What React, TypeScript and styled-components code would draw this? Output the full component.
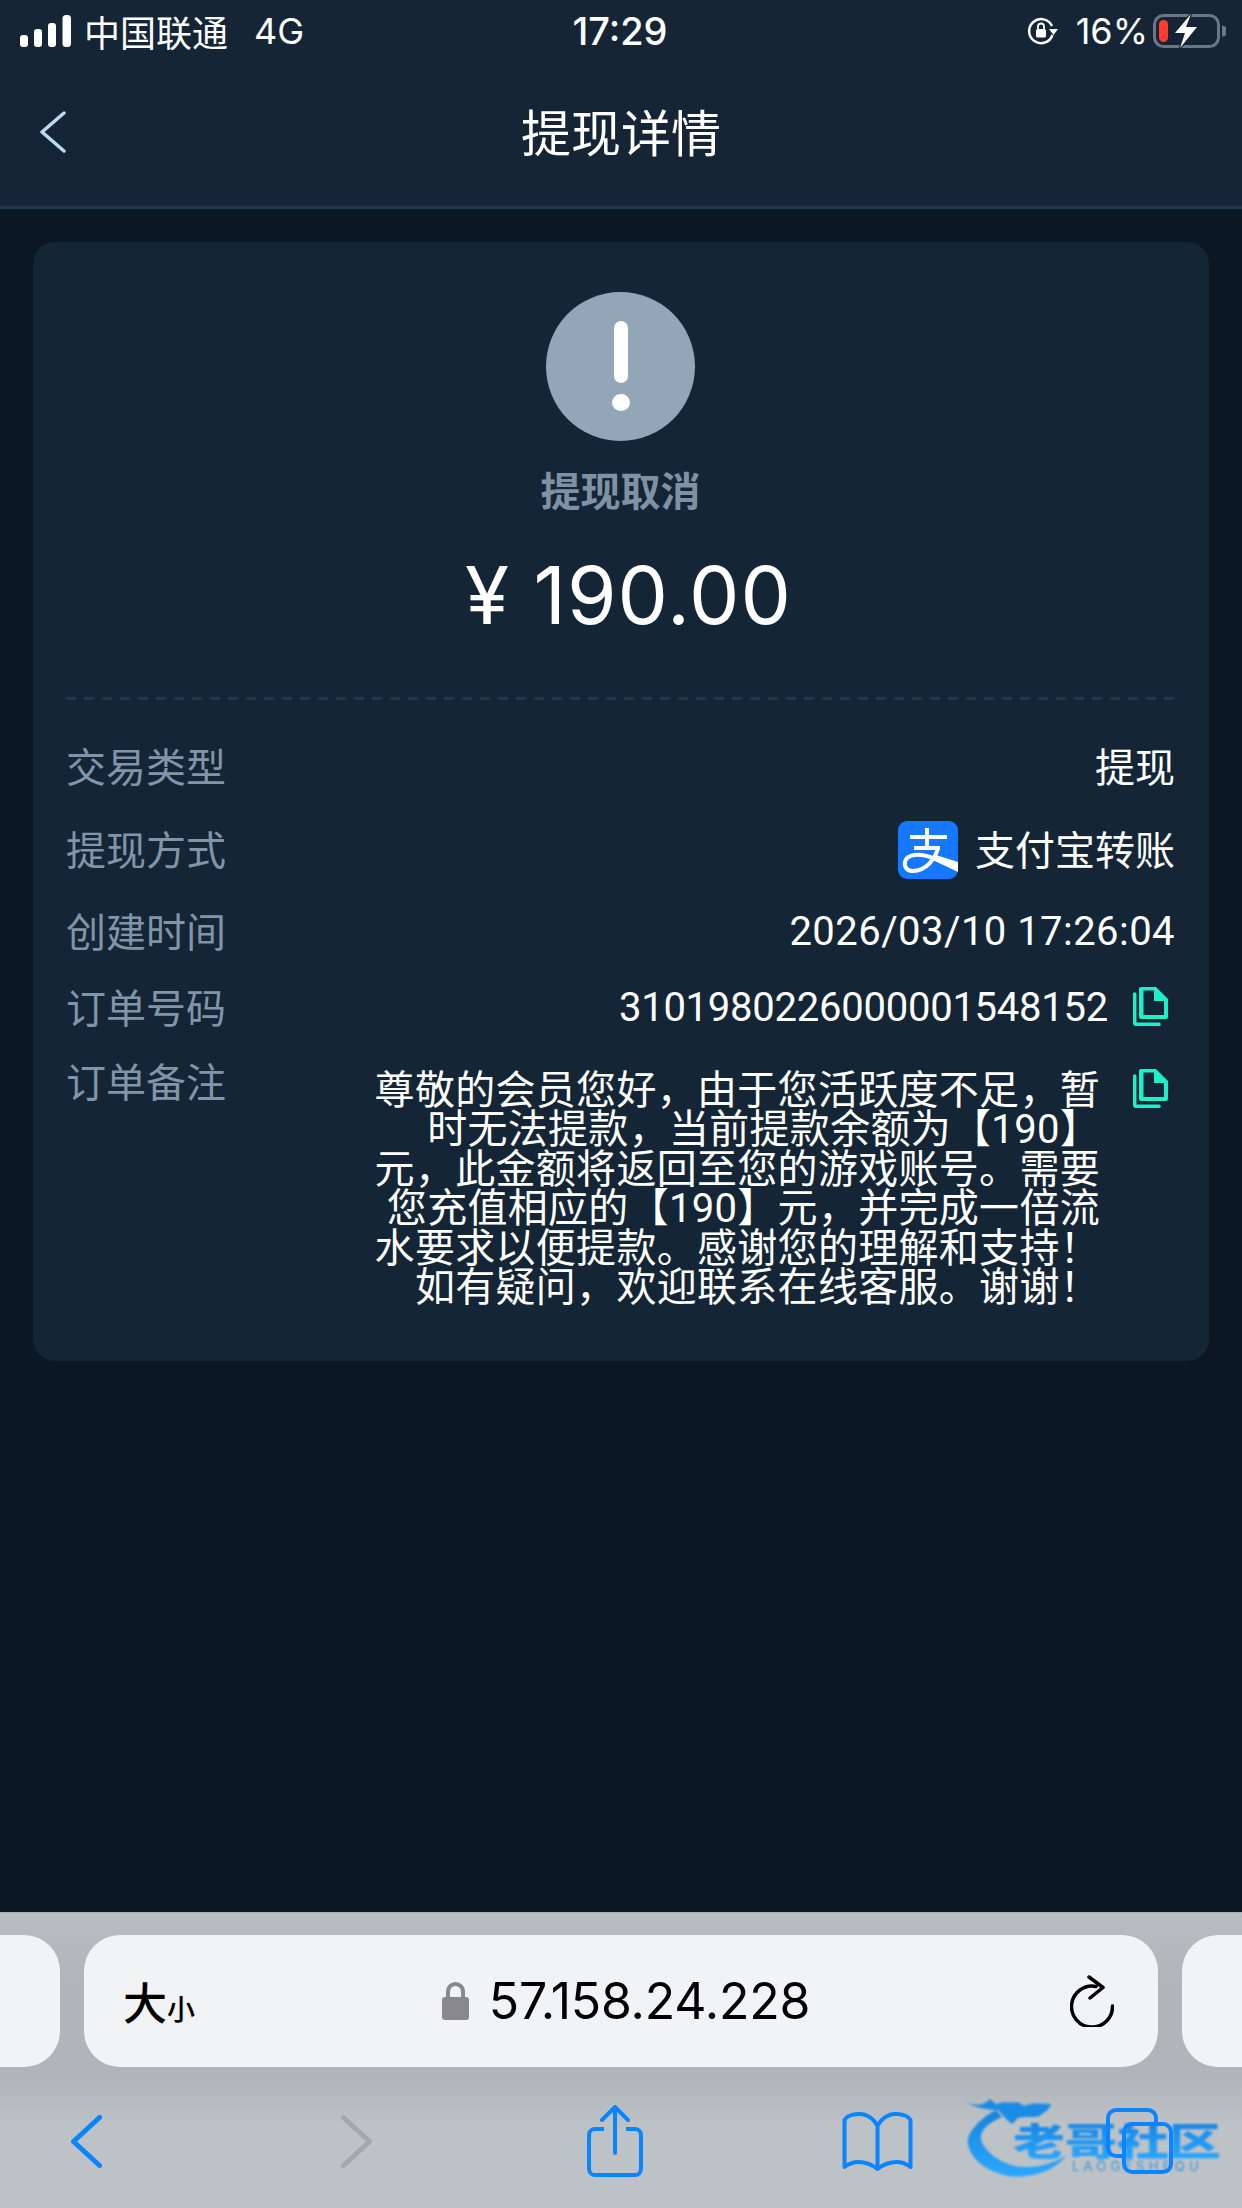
import React from 'react';
import styled, { createGlobalStyle } from 'styled-components';

const GlobalStyle = createGlobalStyle`
  html, body {
    margin: 0;
    padding: 0;
    background: #0b1823;
  }
  body {
    font-family: Inter, "Noto Sans CJK SC", sans-serif;
  }
`;

const Page = styled.div`
  position: relative;
  width: 1242px;
  height: 2208px;
  display: flex;
  flex-direction: column;
  overflow: hidden;
  background: #0b1823;
`;

const TopArea = styled.header`
  height: 206px;
  background: #152536;
  border-bottom: 3px solid #1f3850;
  color: #fff;
`;

const StatusBar = styled.div`
  display: grid;
  grid-template-columns: 1fr auto 1fr;
  align-items: center;
  height: 62px;
  padding: 0 16px 0 14px;
  font-size: 36px;
`;

const StatusLeft = styled.div`
  display: flex;
  align-items: center;
  gap: 12px;
  padding-left: 6px;
`;

const StatusRight = styled.div`
  display: flex;
  align-items: center;
  justify-content: flex-end;
  gap: 17px;
`;

const Network = styled.span`
  margin-left: 14px;
`;

const BatteryIcon = styled.svg`
  margin-left: -12px;
`;

const Clock = styled.div`
  font-weight: 500;
  font-size: 38px;
`;

const NavBar = styled.div`
  display: flex;
  align-items: center;
  justify-content: center;
  position: relative;
  height: 136px;
  padding-bottom: 6px;
`;

const BackIcon = styled.svg`
  position: absolute;
  left: 39px;
  top: 49px;
`;

const Title = styled.h1`
  margin: 0;
  font-size: 50px;
  font-weight: 400;
`;

const Content = styled.main`
  flex: 1;
  padding: 33px 33px 0;
`;

const Card = styled.section`
  height: 1119px;
  box-sizing: border-box;
  padding: 50px 34px 0 33px;
  background: #142536;
  border-radius: 22px;
`;

const Summary = styled.div`
  display: flex;
  flex-direction: column;
  align-items: center;
  height: 405px;
`;

const Divider = styled.div`
  height: 3px;
  background: repeating-linear-gradient(90deg, #1d3a50 0 10px, transparent 10px 18px);
`;

const StatusCircle = styled.div`
  width: 149px;
  height: 149px;
  border-radius: 50%;
  background: #93a6b8;
  display: flex;
  align-items: center;
  justify-content: center;
`;

const StatusText = styled.div`
  margin-top: 24px;
  font-size: 40px;
  line-height: 54px;
  font-weight: 700;
  color: #7f92a4;
`;

const Amount = styled.div`
  margin-top: 26px;
  margin-left: 16px;
  font-size: 80px;
  line-height: 100px;
  font-weight: 400;
  letter-spacing: 1px;
  color: #fff;
`;

const Rows = styled.div`
  padding-top: 24px;
`;

const Row = styled.div<{ $height: number; $top?: boolean }>`
  display: flex;
  align-items: ${(p) => (p.$top ? 'flex-start' : 'center')};
  justify-content: space-between;
  height: ${(p) => p.$height}px;
`;

const Label = styled.div`
  font-size: 40px;
  color: #8095a7;
`;

const NoteLabel = styled(Label)`
  line-height: 82px;
`;

const Value = styled.div<{ $gap?: number; $top?: boolean }>`
  display: flex;
  align-items: ${(p) => (p.$top ? 'flex-start' : 'center')};
  gap: ${(p) => p.$gap ?? 0}px;
  padding-top: ${(p) => (p.$top ? 26 : 0)}px;
  font-family: Roboto, "Noto Sans CJK SC", sans-serif;
  font-size: 40px;
  color: #fff;
`;

const AlipayIcon = styled.svg`
  margin-top: 4px;
`;

const DateText = styled.span`
  padding-top: 3px;
  letter-spacing: 0.45px;
`;

const OrderNumber = styled.span`
  padding-top: 2px;
  letter-spacing: -0.25px;
`;

const Note = styled.div`
  width: 726px;
  margin-top: 3px;
  font-size: 40px;
  line-height: 39.4px;
  letter-spacing: 0.3px;
  color: #fff;
  text-align: right;
`;

const NoteLine = styled.div`
  white-space: nowrap;
`;

const CopyGlyph = styled.svg`
  flex: none;
  margin-right: 7px;
`;

const BottomBar = styled.footer`
  height: 295px;
  border-top: 1px solid #a9afb5;
  background: linear-gradient(#b8bdc2, #b0b5ba 24%, #b0b5ba 56%, #bdc2c7 72%);
`;

const TabStrip = styled.div`
  display: flex;
  gap: 24px;
  margin: 22px 0 0 -102px;
`;

const SidePill = styled.div`
  width: 162px;
  height: 132px;
  background: #f2f3f5;
  border-radius: 36px;
  flex: none;
`;

const AddressPill = styled.div`
  flex: none;
  box-sizing: border-box;
  width: 1074px;
  height: 132px;
  display: flex;
  align-items: center;
  justify-content: space-between;
  padding: 0 44px 0 39px;
  background: #f2f3f5;
  border-radius: 36px;
  color: #000;
`;

const TextSize = styled.div`
  font-size: 44px;
  font-weight: 500;
  small {
    font-size: 28px;
    font-weight: 500;
  }
`;

const Address = styled.div`
  display: flex;
  align-items: center;
  gap: 20px;
  margin-right: 13px;
  font-size: 50px;
  letter-spacing: -0.2px;
`;

const Toolbar = styled.div`
  position: relative;
  z-index: 2;
  display: grid;
  grid-template-columns: 270px 269px 249px 276px 248px;
  justify-items: center;
  align-items: center;
  height: 72px;
  margin: 38px 0 0 -48.5px;
`;

const Watermark = styled.div`
  position: absolute;
  z-index: 1;
  left: 966px;
  bottom: 10px;
  width: 270px;
  height: 100px;
  filter: blur(1px);
`;

const WatermarkName = styled.div`
  position: absolute;
  left: 47px;
  top: 25px;
  font-size: 40px;
  line-height: 40px;
  font-weight: 900;
  white-space: nowrap;
  transform-origin: left top;
  transform: scale(1.3, 0.95);
  color: transparent;
  background: linear-gradient(#1787e6, #2aa8ff);
  background-clip: text;
`;

const WatermarkLatin = styled.div`
  position: absolute;
  left: 106px;
  top: 60px;
  font-size: 13px;
  line-height: 16px;
  letter-spacing: 4.2px;
  white-space: nowrap;
  color: #3b97da;
`;

const CopyIcon = () => (
  <CopyGlyph width="35" height="40" viewBox="0 0 35 40">
    <path
      fillRule="evenodd"
      d="M8 1h15l12 12v18a2 2 0 0 1-2 2H8a2 2 0 0 1-2-2V3a2 2 0 0 1 2-2zM10.500 4.500v24.500h20.500V15H21V4.500z"
      fill="#1cf0c8"
    />
    <path d="M1.700 8v29a1.300 1.300 0 0 0 1.300 1.300h23" fill="none" stroke="#1cf0c8" strokeWidth="3.500" strokeLinecap="round" />
  </CopyGlyph>
);

const noteLines = [
  '尊敬的会员您好，由于您活跃度不足，暂',
  '时无法提款，当前提款余额为【190】',
  '元，此金额将返回至您的游戏账号。需要',
  '您充值相应的【190】元，并完成一倍流',
  '水要求以便提款。感谢您的理解和支持！',
  '如有疑问，欢迎联系在线客服。谢谢！',
];

export default function App() {
  return (
    <Page>
      <GlobalStyle />
      <TopArea>
        <StatusBar>
          <StatusLeft>
            <svg width="52" height="32" viewBox="0 0 52 32">
              <rect x="0" y="20" width="8" height="12" rx="3" fill="#fff" />
              <rect x="14" y="14" width="8" height="18" rx="3" fill="#fff" />
              <rect x="28" y="8" width="8" height="24" rx="3" fill="#fff" />
              <rect x="42.500" y="0" width="8.500" height="32" rx="3.500" fill="#fff" />
            </svg>
            <span>中国联通</span>
            <Network>4G</Network>
          </StatusLeft>
          <Clock>17:29</Clock>
          <StatusRight>
            <svg width="32" height="28" viewBox="0 0 32 28" fill="none">
              <path d="M25.500 18A12 12 0 1 1 25 9" stroke="#fff" strokeWidth="2.500" />
              <path d="M22 12h9l-4.500 6z" fill="#fff" />
              <rect x="9" y="12" width="10" height="8.500" rx="1.500" fill="#fff" />
              <path d="M11 12V9.500a3 3 0 0 1 6 0V12" stroke="#fff" strokeWidth="1.800" />
            </svg>
            <span>16%</span>
            <BatteryIcon width="73" height="36" viewBox="0 0 73 36" fill="none">
              <rect x="1.500" y="2.500" width="64" height="31" rx="9" stroke="#6b7783" strokeWidth="3" />
              <path d="M69 12.500a5.500 5.500 0 0 1 0 11z" fill="#6b7783" />
              <rect x="6" y="7" width="9" height="22" rx="4.500" fill="#ff3b30" />
              <path d="M38 1L22 20h10l-5 15 17-21H33z" fill="#fff" stroke="#152536" strokeWidth="2.500" paintOrder="stroke" />
            </BatteryIcon>
          </StatusRight>
        </StatusBar>
        <NavBar>
          <BackIcon width="30" height="42" viewBox="0 0 30 42" fill="none">
            <path d="M25 2L3 21l22 19" stroke="#bcd9ee" strokeWidth="3.500" strokeLinecap="round" strokeLinejoin="round" />
          </BackIcon>
          <Title>提现详情</Title>
        </NavBar>
      </TopArea>

      <Content>
        <Card>
          <Summary>
            <StatusCircle>
              <svg width="20" height="92" viewBox="0 0 20 92">
                <rect x="3" y="0" width="14" height="62" rx="7" fill="#fff" />
                <ellipse cx="10" cy="81.500" rx="9" ry="8.500" fill="#fff" />
              </svg>
            </StatusCircle>
            <StatusText>提现取消</StatusText>
            <Amount>¥ 190.00</Amount>
          </Summary>
          <Divider />
          <Rows>
            <Row $height={82}>
              <Label>交易类型</Label>
              <Value>提现</Value>
            </Row>
            <Row $height={84}>
              <Label>提现方式</Label>
              <Value $gap={17}>
                <AlipayIcon width="60" height="58" viewBox="0 0 60 58" fill="none">
                  <rect width="60" height="58" rx="9" fill="#1677ff" />
                  <path d="M12 16h37M29 7v20M16 27h26" stroke="#fff" strokeWidth="4" />
                  <path d="M40 27C37 38 28 50 15 50 9 50 6 46 7 41c1-6 9-8 17-7 8 1 14 4 22 8" stroke="#fff" strokeWidth="4" />
                  <path d="M38 34l22 7v10L35 39z" fill="#fff" />
                </AlipayIcon>
                <span>支付宝转账</span>
              </Value>
            </Row>
            <Row $height={80}>
              <Label>创建时间</Label>
              <Value>
                <DateText>2026/03/10 17:26:04</DateText>
              </Value>
            </Row>
            <Row $height={72}>
              <Label>订单号码</Label>
              <Value $gap={25}>
                <OrderNumber>3101980226000001548152</OrderNumber>
                <CopyIcon />
              </Value>
            </Row>
            <Row $height={260} $top>
              <NoteLabel>订单备注</NoteLabel>
              <Value $gap={33} $top>
                <Note>
                  {noteLines.map((line) => (
                    <NoteLine key={line}>{line}</NoteLine>
                  ))}
                </Note>
                <CopyIcon />
              </Value>
            </Row>
          </Rows>
        </Card>
      </Content>

      <BottomBar>
        <TabStrip>
          <SidePill />
          <AddressPill>
            <TextSize>
              大<small>小</small>
            </TextSize>
            <Address>
              <svg width="27" height="38" viewBox="0 0 27 38" fill="none">
                <path d="M6 17V9.500a7.500 7.500 0 0 1 15 0V17" stroke="#88888d" strokeWidth="4" />
                <rect x="0" y="15" width="27" height="23" rx="3" fill="#88888d" />
              </svg>
              <span>57.158.24.228</span>
            </Address>
            <svg width="44" height="52" viewBox="0 0 44 52" fill="none">
              <path d="M26 11.500A20.500 20.500 0 1 0 42.500 31" stroke="#000" strokeWidth="3.500" strokeLinecap="round" />
              <path d="M19 2l14 10.500L20 23" stroke="#000" strokeWidth="3.500" strokeLinecap="round" strokeLinejoin="round" />
            </svg>
          </AddressPill>
          <SidePill />
        </TabStrip>
        <Toolbar>
          <svg width="31" height="53" viewBox="0 0 31 53" fill="none">
            <path d="M28.500 2.500L2.500 26.500l26 24" stroke="#0a84ff" strokeWidth="5" strokeLinecap="round" strokeLinejoin="round" />
          </svg>
          <svg width="31" height="53" viewBox="0 0 31 53" fill="none">
            <path d="M2.500 2.500l26 24-26 24" stroke="#a3a8ac" strokeWidth="5" strokeLinecap="round" strokeLinejoin="round" />
          </svg>
          <svg width="56" height="72" viewBox="0 0 56 72" fill="none">
            <path d="M17 24H8a6 6 0 0 0-6 6v34a6 6 0 0 0 6 6h40a6 6 0 0 0 6-6V30a6 6 0 0 0-6-6h-9" stroke="#0a84ff" strokeWidth="4" />
            <path d="M28 48V3M15 15L28 2l13 13" stroke="#0a84ff" strokeWidth="4" strokeLinecap="round" />
          </svg>
          <svg width="71" height="59" viewBox="0 0 71 59" fill="none">
            <path
              d="M35.500 14C31 5 23 1.500 16 2 9 2.500 4 5 2.500 8v47c4-3 9-5 14-5 8 0 14 3 19 7 5-4 11-7 19-7 5 0 10 2 14 5V8c-1.500-3-6.500-5.500-13.500-6-7-.5-15 3-19.500 12zM35.500 14v42"
              stroke="#0a84ff"
              strokeWidth="4"
              strokeLinejoin="round"
            />
          </svg>
          <svg width="67" height="66" viewBox="0 0 67 66" fill="none">
            <path d="M50 14v-4a8 8 0 0 0-8-8H10a8 8 0 0 0-8 8v30a8 8 0 0 0 8 8h6" stroke="#0a84ff" strokeWidth="4" />
            <rect x="18" y="16" width="47" height="48" rx="8" stroke="#0a84ff" strokeWidth="4" />
          </svg>
        </Toolbar>
      </BottomBar>

      <Watermark>
        <svg width="104" height="84" viewBox="0 0 104 84">
          <defs>
            <linearGradient id="dragon" x1="0" y1="0" x2="0" y2="1">
              <stop offset="0" stopColor="#1684dd" />
              <stop offset="1" stopColor="#2aa8ff" />
            </linearGradient>
          </defs>
          <path d="M30 12C12 22 0 36 2 46c3 20 32 36 58 32 18-2 32-10 41-21-11 7-27 13-44 12-19-1-37-13-42-27-2-10 9-18 21-23z" fill="url(#dragon)" />
          <path d="M0 4c10 4 18 4 24-3l6 5c10-4 14 0 22-2l6 4c8-4 18-2 27-2-1 6-9 9-11 12-8 2-16 0-22 2l-6 6c-6-4-10-10-14-14C22 12 10 10 0 4z" fill="#1b8ce6" />
        </svg>
        <WatermarkName>老哥社区</WatermarkName>
        <WatermarkLatin>LAOGESHEQU</WatermarkLatin>
      </Watermark>
    </Page>
  );
}
